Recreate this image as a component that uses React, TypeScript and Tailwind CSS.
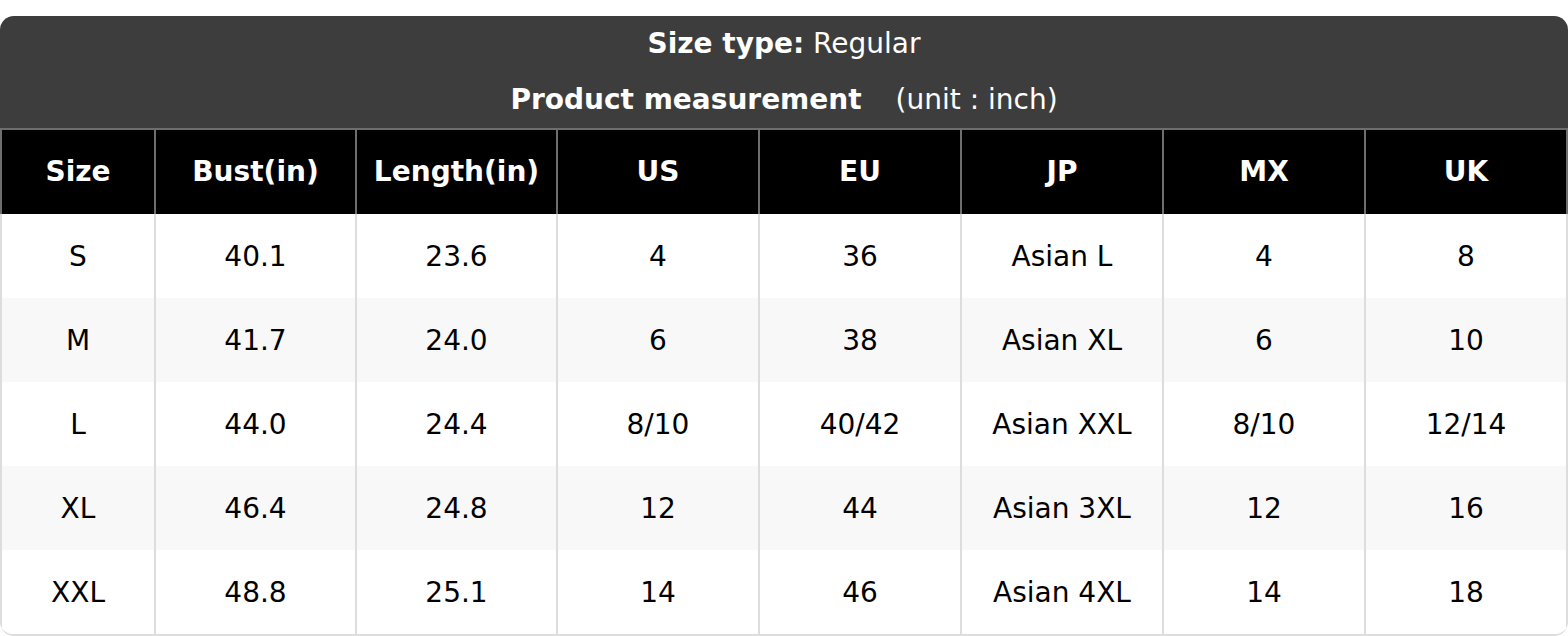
import React from "react";

const headers = ["Size", "Bust(in)", "Length(in)", "US", "EU", "JP", "MX", "UK"];
const rows = [
  ["S", "40.1", "23.6", "4", "36", "Asian L", "4", "8"],
  ["M", "41.7", "24.0", "6", "38", "Asian XL", "6", "10"],
  ["L", "44.0", "24.4", "8/10", "40/42", "Asian XXL", "8/10", "12/14"],
  ["XL", "46.4", "24.8", "12", "44", "Asian 3XL", "12", "16"],
  ["XXL", "48.8", "25.1", "14", "46", "Asian 4XL", "14", "18"],
];

const cols = "grid grid-cols-[154px_201px_201px_202px_202px_202px_202px_202px]";

export default function App() {
  return (
    <div
      className="w-[1568px] h-[636px] bg-white pt-[16px]"
      style={{ fontFamily: '"DejaVu Sans", sans-serif' }}
    >
      <div className="rounded-[14px] overflow-hidden border-b-2 border-[#dddddd]">
        <div className="bg-[#3d3d3d] text-white text-[28px] h-[112px] flex flex-col">
          <div className="h-[56px] flex items-center justify-center leading-none">
            <span className="font-bold">Size type:</span>
            <span>&nbsp;Regular</span>
          </div>
          <div className="h-[56px] flex items-center justify-center leading-none">
            <span className="font-bold">Product measurement</span>
            <span className="ml-[34px]">(unit : inch)</span>
          </div>
        </div>
        <div className="h-[2px] bg-[#6e6e6e]" />
        <div className={`${cols} bg-black text-white font-bold text-[28px] border-r-2 border-[#6e6e6e]`}>
          {headers.map((h) => (
            <div
              key={h}
              className="h-[84px] border-l-2 border-[#6e6e6e] flex items-center justify-center leading-none"
            >
              {h}
            </div>
          ))}
        </div>
        {rows.map((r, i) => (
          <div
            key={i}
            className={`${cols} text-[28px] text-black border-r-2 border-[#dddddd] ${
              i % 2 === 1 ? "bg-[#f8f8f8]" : "bg-white"
            }`}
          >
            {r.map((c, j) => (
              <div
                key={j}
                className="h-[84px] pt-[2px] border-l-2 border-[#dddddd] flex items-center justify-center leading-none"
              >
                {c}
              </div>
            ))}
          </div>
        ))}
      </div>
    </div>
  );
}
